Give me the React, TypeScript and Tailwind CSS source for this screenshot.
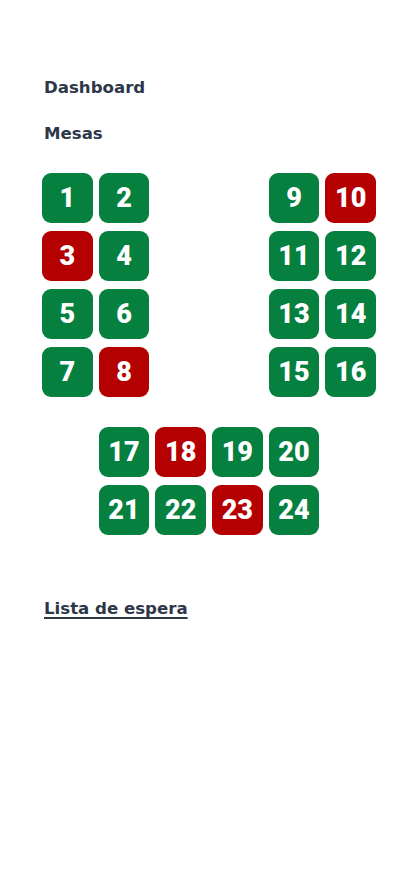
import React from "react";

const red = new Set([3, 8, 10, 18, 23]);

function Tile({ n, className = "" }: { n: number; className?: string }) {
  const bg = red.has(n) ? "bg-[#b40000]" : "bg-[#05803f]";
  return (
    <div
      className={`${bg} ${className} h-[50px] rounded-[9px] flex items-center justify-center text-white text-[27px] font-black leading-none`}
      style={{ fontFamily: "Roboto, 'DejaVu Sans', sans-serif" }}
    >
      {n}
    </div>
  );
}

export default function App() {
  const left = [1, 2, 3, 4, 5, 6, 7, 8];
  const right = [9, 10, 11, 12, 13, 14, 15, 16];
  return (
    <div
      className="min-h-[896px] w-[414px] bg-white pt-[76px] text-[#2d3748]"
      style={{ fontFamily: "'DejaVu Sans', 'Open Sans', sans-serif" }}
    >
      <div className="pl-[44px] text-[16.6px] font-bold leading-[24px]">Dashboard</div>
      <div className="pl-[44px] mt-[22px] text-[16.6px] font-bold leading-[24px]">Mesas</div>

      <div className="ml-[42px] mt-[27px] w-[334px] grid grid-cols-6 gap-x-[6px] gap-y-[8px]">
        {[0, 1, 2, 3].map((r) => (
          <React.Fragment key={r}>
            <Tile n={left[r * 2]} className="col-start-1" />
            <Tile n={left[r * 2 + 1]} className="col-start-2" />
            <Tile n={right[r * 2]} className="col-start-5" />
            <Tile n={right[r * 2 + 1]} className="col-start-6" />
          </React.Fragment>
        ))}
      </div>

      <div className="ml-[42px] mt-[30px] w-[334px] grid grid-cols-6 gap-x-[6px] gap-y-[8px]">
        <Tile n={17} className="col-start-2" />
        <Tile n={18} />
        <Tile n={19} />
        <Tile n={20} />
        <Tile n={21} className="col-start-2" />
        <Tile n={22} />
        <Tile n={23} />
        <Tile n={24} />
      </div>

      <div className="pl-[44px] mt-[62px] text-[16.6px] font-bold leading-[24px]">
        <span className="underline underline-offset-[3px] decoration-[2px]">Lista de espera</span>
      </div>
    </div>
  );
}
